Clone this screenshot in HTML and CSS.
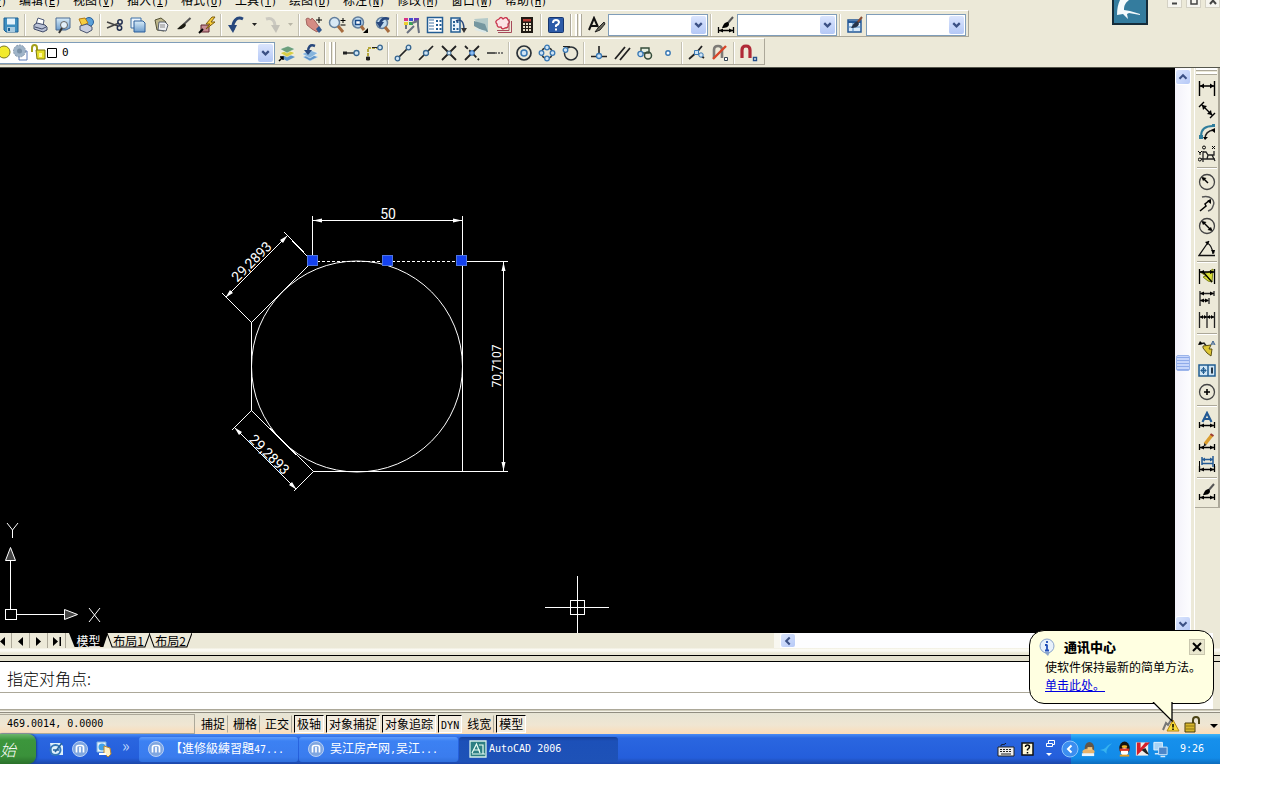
FILE: index.html
```html
<!DOCTYPE html>
<html lang="zh-CN">
<head>
<meta charset="utf-8">
<title>AutoCAD 2006</title>
<link rel="stylesheet" href="styles.css">
</head>
<body>
<svg class="defs" aria-hidden="true">
  <defs>
    <symbol id="chev" viewBox="0 0 16 18"><path d="M4.500 7 8 10.500 11.500 7" fill="none" stroke="#3c5185" stroke-width="2.400"/></symbol>
    <symbol id="brush" viewBox="0 0 18 18"><path d="M15.500 2 8 9" stroke="#555" stroke-width="2"/><path d="M10 7.500C6 8 5 11 2 13c4 1 8-1 9-4z" fill="#1c1c14"/></symbol>
    <symbol id="hdim" viewBox="0 0 18 18"><path d="M1.500 11v6M16.500 11v6M2 14.500h14" stroke="#000" stroke-width="1.300" fill="none"/><path d="M2 14.500l4-2v4zM16 14.500l-4-2v4z"/></symbol>
    <symbol id="mball" viewBox="0 0 18 18"><circle cx="9" cy="9" r="7.500" fill="#7fa6e0" stroke="#b8cff5"/><path d="M5.500 12.500V7.500q0-2 2-2h3q2 0 2 2v5M9 7v5.500" fill="none" stroke="#fff" stroke-width="1.700"/></symbol>
    <linearGradient id="bl" x2="0" y2="1"><stop stop-color="#d9edf9"/><stop offset="1" stop-color="#6c9ccc"/></linearGradient>
  </defs>
</svg>
<div class="screen">
  <header class="header">
    <div class="bars">
      <nav class="menu">
        <a href="#">文件<i>(<u>F</u>)</i></a><a href="#">编辑<i>(<u>E</u>)</i></a><a href="#">视图<i>(<u>V</u>)</i></a><a href="#">插入<i>(<u>I</u>)</i></a><a href="#">格式<i>(<u>O</u>)</i></a><a href="#">工具<i>(<u>T</u>)</i></a><a href="#">绘图<i>(<u>D</u>)</i></a><a href="#">标注<i>(<u>N</u>)</i></a><a href="#">修改<i>(<u>M</u>)</i></a><a href="#">窗口<i>(<u>W</u>)</i></a><a href="#">帮助<i>(<u>H</u>)</i></a>
      </nav>
      <div class="toolbar toolbar-styles">
        <button class="tool" aria-label="保存"><svg viewBox="0 0 18 18"><path d="M2 2h14v14H4l-2-2z" fill="#3f8fc0" stroke="#1d5f93"/><path d="M5 2.500h8v6H5z" fill="#e6f3fb"/><path d="M5 11h8v5H5z" fill="#a9cbe0"/><path d="M6 12h2v3H6z" fill="#1d5f93"/></svg></button>
        <span class="sep"></span>
        <button class="tool" aria-label="打印"><svg viewBox="0 0 18 18"><path d="M5 8 7 2l6 2-1 6z" fill="#fff" stroke="#4e5a78"/><path d="M3 9l3-2 8 2 2 2v3l-4 2-9-3z" fill="#b9c1d6" stroke="#3f4a68"/><path d="M4 11l7 2 4-2" fill="none" stroke="#3f4a68"/></svg></button>
        <button class="tool" aria-label="打印预览"><svg viewBox="0 0 18 18"><path d="M2 2h14v10l-4 2H2z" fill="url(#bl)" stroke="#4a6a92"/><circle cx="10" cy="9" r="3.500" fill="#e2f0fa" stroke="#666"/><path d="M8 12l-3 5" stroke="#333" stroke-width="2"/></svg></button>
        <button class="tool" aria-label="发布"><svg viewBox="0 0 18 18"><circle cx="12" cy="6" r="4.500" fill="#5aa0d8" stroke="#285f9c"/><path d="M2 3l6-1 3 5-6 3z" fill="#f7cd3e" stroke="#b47a12"/><path d="M3 10l7-2 5 3v3l-5 3-7-3z" fill="#c9cede" stroke="#4a5570"/></svg></button>
        <span class="sep"></span>
        <button class="tool" aria-label="剪切"><svg viewBox="0 0 18 18"><path d="M1 6l11 4M1 12l12-5" stroke="#444" stroke-width="1.500"/><circle cx="14" cy="6" r="2.200" fill="none" stroke="#222f50" stroke-width="1.500"/><circle cx="13.500" cy="12" r="2.200" fill="none" stroke="#222f50" stroke-width="1.500"/></svg></button>
        <button class="tool" aria-label="复制"><svg viewBox="0 0 18 18"><path d="M2 2h10v10H2z" fill="#eaf4fc" stroke="#3d6fa5"/><path d="M5 5h9l2 2v9H5z" fill="url(#bl)" stroke="#2c5f9a"/></svg></button>
        <button class="tool" aria-label="粘贴"><svg viewBox="0 0 18 18"><path d="M3 4l6-2 5 4-2 9-7-1z" fill="#bdb68a" stroke="#555236"/><path d="M7 6l6 0 3 3-2 6-8-1z" fill="#eef0f2" stroke="#59606c"/><path d="M8 9h5M8 11h5" stroke="#888"/></svg></button>
        <button class="tool" aria-label="特性匹配"><svg><use href="#brush"/></svg></button>
        <button class="tool" aria-label="块编辑器"><svg viewBox="0 0 18 18"><path d="M3 9h8v7H3z" fill="#c78d94" stroke="#5f2730"/><path d="M14 1 8 8h4l-4 5 9-7h-4l4-5z" fill="#fbd03a" stroke="#7d5c0c"/><path d="M1 17l4-4" stroke="#000" stroke-width="2"/></svg></button>
        <span class="sep"></span>
        <button class="tool" aria-label="放弃"><svg viewBox="0 0 18 18"><path d="M16 3C10 0 5 5 6 14" fill="none" stroke="#27477c" stroke-width="3"/><path d="M1 9h9l-4 8z" fill="#27477c"/></svg></button>
        <button class="drop" aria-label="放弃列表"><svg viewBox="0 0 8 18"><path d="M2 7h5L4.500 10z" fill="#222"/></svg></button>
        <button class="tool" aria-label="重做"><svg viewBox="0 0 18 18"><path d="M3 3c6-2 10 2 9 10" fill="none" stroke="#cbc9c0" stroke-width="3"/><path d="M8 9h9l-4 8z" fill="#c3c1b8"/></svg></button>
        <button class="drop" aria-label="重做列表"><svg viewBox="0 0 8 18"><path d="M2 7h5L4.500 10z" fill="#b8b5a6"/></svg></button>
        <span class="sep"></span>
        <button class="tool" aria-label="平移"><svg viewBox="0 0 18 18"><path d="M1 3l2-1 3 2 1-2 3 3 2 3 3 4-3 4-5-3-5-4z" fill="#d58c84" stroke="#a4655f"/><path d="M11 13l3-3 3 4-3 3z" fill="#33588e"/><path d="M14 1v6M11 4h6" stroke="#000"/></svg></button>
        <button class="tool" aria-label="实时缩放"><svg viewBox="0 0 18 18"><circle cx="6.500" cy="6.500" r="5" fill="#d8e8f4" stroke="#627e9c" stroke-width="1.500"/><path d="M10 10l5 6" stroke="#a76c3f" stroke-width="3"/><path d="M15 2v5M12.500 4.500h5M12.500 9h5" stroke="#000"/></svg></button>
        <button class="tool" aria-label="窗口缩放"><svg viewBox="0 0 18 18"><circle cx="7" cy="6.500" r="5.500" fill="#c2dcf0" stroke="#627e9c" stroke-width="1.500"/><path d="M4.500 4.500h5v4h-5z" fill="#fff" stroke="#194a88" stroke-width="1.500"/><path d="M10 10l3 4" stroke="#a76c3f" stroke-width="3"/><path d="M17 12v5h-5z"/></svg></button>
        <button class="tool" aria-label="缩放上一个"><svg viewBox="0 0 18 18"><circle cx="8" cy="7" r="5.500" fill="#c2dcf0" stroke="#627e9c" stroke-width="1.500"/><path d="M15 3C10 1 6 4 6 9" fill="none" stroke="#27477c" stroke-width="2.500"/><path d="M2 6h8l-4 6z" fill="#27477c"/><path d="M11 11l4 5" stroke="#a76c3f" stroke-width="3"/></svg></button>
        <span class="sep"></span>
        <button class="tool" aria-label="特性"><svg viewBox="0 0 18 18"><path d="M1 2h4v3H1z" fill="#d63384"/><path d="M6 2h4v3H6z" fill="#3d51d0"/><path d="M11 2h5v3h-5z" fill="#6c3bbb"/><path d="M1 6h4v3H1z" fill="#ebcf30"/><path d="M6 6h4v3H6z" fill="#3aa357"/><path d="M9 7l6-2v5l1 7M11 10l-7 7M3 9v4" fill="none" stroke="#6a7282" stroke-width="2"/></svg></button>
        <button class="tool" aria-label="设计中心"><svg viewBox="0 0 18 18"><path d="M1.500 1.500h15v15h-15z" fill="#fff" stroke="#235d93" stroke-width="1.500"/><path d="M3 4h5M3 7h5M3 10h5M3 13h5" stroke="#4577a5"/><path d="M10 4h2v2h-2zM13.500 4h2v2h-2zM10 8h2v2h-2zM13.500 8h2v2h-2zM10 12h2v2h-2zM13.500 12h2v2h-2z" fill="#235d93"/></svg></button>
        <button class="tool" aria-label="工具选项板"><svg viewBox="0 0 18 18"><path d="M2 2h9v14H2z" fill="#eaf3fb" stroke="#235d93" stroke-width="1.500"/><path d="M4 5h2v2H4zM7.500 5h2v2h-2zM4 8.500h2v2H4zM4 12h2v2H4zM7.500 12h2v2h-2z" fill="#235d93"/><path d="M7 5c5-3 8 1 8 9" fill="none" stroke="#27477c" stroke-width="1.500"/><path d="M12 12h6l-3 5z" fill="#333"/></svg></button>
        <button class="tool" aria-label="图纸集"><svg viewBox="0 0 18 18"><path d="M2 3l14-1v14l-5-2z" fill="#b4cac9"/><path d="M2 5l11 3 3 8-5-1-9-5z" fill="#7597a0"/><path d="M3 13l11 3" stroke="#dce9e9" stroke-width="2"/></svg></button>
        <button class="tool" aria-label="标记集"><svg viewBox="0 0 18 18"><path d="M4 3q2-3 4 0 4-3 5 1 3 2 0 4 1 4-3 4-3 2-4-1-4 1-4-3-3-3 2-5z" fill="#fbe3e6" stroke="#c8314a" stroke-width="1.300"/><path d="M2 14.500h12V3M3 16.500h13.500V5" fill="none" stroke="#a64a5b"/></svg></button>
        <button class="tool" aria-label="计算器"><svg viewBox="0 0 18 18"><path d="M3 1h12v16H3z" fill="#1f1a14"/><path d="M5 3h8v2.500H5z" fill="#b53b34"/><path d="M5 7h2v2H5zM8 7h2v2H8zM11 7h2v2h-2zM5 10h2v2H5zM8 10h2v2H8zM11 10h2v2h-2zM5 13h2v2H5zM8 13h2v2H8zM11 13h2v2h-2z" fill="#e8dfc9"/></svg></button>
        <span class="sep"></span>
        <button class="tool" aria-label="帮助"><svg viewBox="0 0 18 18"><rect x="1.500" y="1.500" width="15" height="15" rx="1" fill="#2d5ba8" stroke="#17366e"/><path d="M6 7q0-3 3-3t3 2.500q0 1.500-3 3v1.500M9 12.500v2" fill="none" stroke="#fff" stroke-width="2"/></svg></button>
        <span class="grip"></span>
        <button class="tool" aria-label="文字样式"><svg viewBox="0 0 18 18"><path d="M1 14 6 2l4 9M3 10h6" fill="none" stroke="#111" stroke-width="2"/><path d="M16 6l-6 6-3 4 5-2 5-6z" fill="#66665a" stroke="#222"/></svg></button>
        <div class="combo"><select aria-label="文字样式"><option></option></select><svg class="chev"><use href="#chev"/></svg></div>
        <span class="sep"></span>
        <button class="tool" aria-label="标注样式"><svg viewBox="0 0 18 18"><use href="#hdim"/><path d="M16 1l-6 7" stroke="#555" stroke-width="2"/><path d="M11 6c-4 0-5 4-6 6 4 0 7-1 7-4z"/></svg></button>
        <div class="combo"><select aria-label="标注样式"><option></option></select><svg class="chev"><use href="#chev"/></svg></div>
        <span class="sep"></span>
        <button class="tool" aria-label="表格样式"><svg viewBox="0 0 18 18"><path d="M2 4h13v12H2z" fill="#d8eafa" stroke="#245896" stroke-width="1.500"/><path d="M2 5h13v2H2z" fill="#245896"/><path d="M2 11h13M7 7v9" stroke="#4b83bd"/><path d="M16 1l-5 6" stroke="#8b4d33" stroke-width="2"/><path d="M12 5.500C8 6 7 9 5 12c4 0 7-1 8-4z" fill="#26344b"/></svg></button>
        <div class="combo"><select aria-label="表格样式"><option></option></select><svg class="chev"><use href="#chev"/></svg></div>
      </div>
      <div class="toolbar toolbar-layers">
        <div class="combo combo-layer">
          <svg class="layer-state" viewBox="0 0 62 20"><circle cx="4" cy="9" r="6" fill="#f2ea2e" stroke="#7d7a22"/><path d="M19 8h8v9h-8z" fill="#fff" stroke="#5c7bb5"/><circle cx="19.500" cy="8" r="6" fill="#9fb4c8" stroke="#8196ac" stroke-dasharray="2 1"/><circle cx="19.500" cy="8" r="2.500" fill="#7990a6"/><path d="M32 9V5q0-3 2.500-3T37 5v4" fill="none" stroke="#a39f1a" stroke-width="2"/><path d="M36 7h9v9h-8z" fill="#e4de28" stroke="#7c7812"/><path d="M39 10h3v4h-3z" fill="#fff79a"/><path d="M47.500 5.500h9v9h-9z" fill="#fff" stroke="#000"/></svg>
          <select aria-label="图层"><option>0</option></select><svg class="chev"><use href="#chev"/></svg>
        </div>
        <button class="tool" aria-label="图层置为当前"><svg viewBox="0 0 18 18"><path d="M2 13l8-3 7 3-8 4z" fill="#5c93c9"/><path d="M2 9l8-3 7 3-8 4z" fill="#d7cd45" stroke="#fff" stroke-width=".5"/><path d="M2 5l8-3 7 3-8 4z" fill="#6c9f7b" stroke="#fff" stroke-width=".5"/><path d="M1 17l4-4M2 13h3v3" fill="none" stroke="#000" stroke-width="1.500"/></svg></button>
        <button class="tool" aria-label="上一个图层"><svg viewBox="0 0 18 18"><path d="M2 13l7-3 8 3-8 4z" fill="#5c93c9" stroke="#dcebf8" stroke-width=".5"/><path d="M1 10l8-4 8 3-8 5z" fill="#86b4dc" stroke="#fff" stroke-width=".5"/><path d="M14 2C9 0 7 3 7 8" fill="none" stroke="#27477c" stroke-width="2.500"/><path d="M3 6h8l-4 5z" fill="#27477c"/></svg></button>
        <span class="grip"></span>
        <button class="tool" aria-label="临时追踪点"><svg viewBox="0 0 18 18"><path d="M4 9h8" stroke="#333" stroke-width="1.500"/><path d="M1 7.500h4v3H1z" fill="#222"/><circle cx="14.500" cy="9" r="2.500" fill="#cfe4f4" stroke="#35658f" stroke-width="1.300"/></svg></button>
        <button class="tool" aria-label="捕捉自"><svg viewBox="0 0 18 18"><path d="M3 12V4h9" fill="none" stroke="#b5a83c" stroke-width="2" stroke-dasharray="3 1"/><path d="M1.500 13h3v3h-3zM7 3.500h6" fill="#222" stroke="#222"/><circle cx="15" cy="3.500" r="2.300" fill="#cfe4f4" stroke="#35658f" stroke-width="1.300"/></svg></button>
        <span class="sep"></span>
        <button class="tool" aria-label="捕捉到端点"><svg viewBox="0 0 18 18"><path d="M3 15 15 3" stroke="#222" stroke-width="1.700"/><circle cx="14.500" cy="3.500" r="2.300" fill="#cfe4f4" stroke="#35658f" stroke-width="1.300"/><circle cx="3.500" cy="14.500" r="2.300" fill="#cfe4f4" stroke="#35658f" stroke-width="1.300"/></svg></button>
        <button class="tool" aria-label="捕捉到中点"><svg viewBox="0 0 18 18"><path d="M2 16 16 2" stroke="#222" stroke-width="1.700"/><circle cx="9" cy="9" r="2.500" fill="#cfe4f4" stroke="#35658f" stroke-width="1.300"/></svg></button>
        <button class="tool" aria-label="捕捉到交点"><svg viewBox="0 0 18 18"><path d="M2 2l14 14M16 2 2 16" stroke="#222" stroke-width="1.800"/><circle cx="9" cy="9" r="2" fill="#cfe4f4" stroke="#35658f"/></svg></button>
        <button class="tool" aria-label="捕捉到外观交点"><svg viewBox="0 0 18 18"><path d="M2 16 16 2" stroke="#222" stroke-width="1.800"/><path d="M2 2l14 14" stroke="#222" stroke-width="1.800" stroke-dasharray="4 2"/><circle cx="9" cy="9" r="2.300" fill="#8dbcf0" stroke="#2667b5"/></svg></button>
        <button class="tool" aria-label="捕捉到延长线"><svg viewBox="0 0 18 18"><path d="M1 9h8" stroke="#333" stroke-width="1.600"/><path d="M9 9h8" stroke="#555" stroke-width="1.600" stroke-dasharray="2 1"/></svg></button>
        <span class="sep"></span>
        <button class="tool" aria-label="捕捉到圆心"><svg viewBox="0 0 18 18"><circle cx="9" cy="9" r="7" fill="none" stroke="#2b3238" stroke-width="1.700"/><circle cx="9" cy="9" r="3" fill="#cfe4f4" stroke="#3878b4" stroke-width="1.500"/></svg></button>
        <button class="tool" aria-label="捕捉到象限点"><svg viewBox="0 0 18 18"><circle cx="9" cy="9" r="5.500" fill="none" stroke="#2b3238" stroke-width="1.500"/><g fill="#cfe4f4" stroke="#3878b4" stroke-width="1.300"><circle cx="9" cy="3.500" r="2.300"/><circle cx="3.500" cy="9" r="2.300"/><circle cx="14.500" cy="9" r="2.300"/><circle cx="9" cy="14.500" r="2.300"/></g></svg></button>
        <button class="tool" aria-label="捕捉到切点"><svg viewBox="0 0 18 18"><path d="M2 2.500h7" stroke="#222"/><circle cx="10" cy="9.500" r="6.500" fill="none" stroke="#2b3238" stroke-width="1.500"/><circle cx="4.500" cy="6" r="2.300" fill="#cfe4f4" stroke="#3878b4" stroke-width="1.300"/></svg></button>
        <span class="sep"></span>
        <button class="tool" aria-label="捕捉到垂足"><svg viewBox="0 0 18 18"><path d="M9 2v9M1 12.500h16" stroke="#222" stroke-width="1.600"/><circle cx="9" cy="12" r="2.500" fill="#cfe4f4" stroke="#3878b4" stroke-width="1.300"/></svg></button>
        <button class="tool" aria-label="捕捉到平行线"><svg viewBox="0 0 18 18"><path d="M2 15 12 3M7 16 17 4" stroke="#222" stroke-width="1.800"/></svg></button>
        <button class="tool" aria-label="捕捉到插入点"><svg viewBox="0 0 18 18"><path d="M5 4h8v5H5z" fill="#e4eedf" stroke="#344c3a" stroke-width="1.400"/><circle cx="12" cy="11.500" r="3.500" fill="none" stroke="#344c3a" stroke-width="1.500"/><circle cx="4.500" cy="10" r="2.600" fill="#cfe4f4" stroke="#3878b4" stroke-width="1.300"/></svg></button>
        <button class="tool" aria-label="捕捉到节点"><svg viewBox="0 0 18 18"><circle cx="9" cy="9" r="2.200" fill="#fff" stroke="#3878b4" stroke-width="1.400"/></svg></button>
        <span class="sep"></span>
        <button class="tool" aria-label="捕捉到最近点"><svg viewBox="0 0 18 18"><path d="M1 15 9 8l5-6M8 8l8 6" fill="none" stroke="#222" stroke-width="1.800"/><path d="M6.500 6.500h4v4h-4z" fill="#cfe4f4" stroke="#3878b4"/><circle cx="13" cy="11" r="2.200" fill="#cfe4f4" stroke="#3878b4"/></svg></button>
        <button class="tool" aria-label="无捕捉"><svg viewBox="0 0 18 18"><path d="M3 14V6q0-4 4-4t4 4v8" fill="none" stroke="#7d7b76" stroke-width="2.600"/><path d="M2 15 15 2" stroke="#d84528" stroke-width="2.400"/><path d="M13.500 13.500h3v3h-3z" fill="#fff" stroke="#345"/></svg></button>
        <span class="sep"></span>
        <button class="tool" aria-label="对象捕捉设置"><svg viewBox="0 0 18 18"><path d="M2 14V6q0-4 4-4t4 4v8" fill="none" stroke="#b02a38" stroke-width="3.200"/><path d="M13.500 13.500h3v3h-3z" fill="#fff" stroke="#24508c" stroke-width="1.400"/></svg></button>
      </div>
    </div>
    <svg class="brand" viewBox="0 0 36 25" aria-label="通讯中心标志"><path d="M0 0h36v25H0z" fill="#152c3a"/><path d="M2 0h32v23H2z" fill="#347c9e"/><path d="M8 0h9c-4 3-5 6-5 10l6 1 10 3v1l-11-2-2 1 1 5-5-5-6 1C5 9 6 4 8 0z" fill="#f4fafc"/></svg>
    <div class="winbtns">
      <button aria-label="最小化"><svg viewBox="0 0 10 10"><path d="M2 6.500h5" stroke="#444" stroke-width="2"/></svg></button>
      <button aria-label="还原"><svg viewBox="0 0 10 10"><path d="M2 1h6v6H2z" fill="none" stroke="#444" stroke-width="1.500"/></svg></button>
      <button aria-label="关闭"><svg viewBox="0 0 10 10"><path d="M2 0l6 7M8 0 2 7" stroke="#444" stroke-width="2"/></svg></button>
    </div>
  </header>

  <main class="workspace">
    <svg class="drawing" role="img" aria-label="图形区">
      <g transform="translate(0 -68)" fill="none" stroke="#fff">
        <circle cx="357" cy="366.500" r="105.500"/>
        <g shape-rendering="crispEdges">
          <path d="M251.500 322v89M313 471.500h195M462.500 216v255M466 261.500h42M503.500 262v209M313 220.500h149M312.500 216v45"/>
          <path d="M312 261.500h150" stroke-dasharray="3 2"/>
          <path d="M251.500 322.500l61-61M251.500 410.500l62 61M287.500 235.500l-62 62M284.500 232.500l28 29M222.500 293.500l29 29M234.500 427.500l62 62M251.500 410.500l-20 20M313.500 471.500l-20 20"/>
        </g>
        <g fill="#fff" stroke="none">
          <path d="M313 220.500l9-2v4zM462 220.500l-9-2v4zM503.500 262l-2 9h4zM503.500 471l-2-9h4zM287.500 235.500l-7.500 4.500 3 3zM225.500 297.500l4.500-7.500 3 3zM234.500 427.500l4.500 7.500 3-3zM296.500 489.500l-7.500-4.500 3-3z"/>
        </g>
        <g class="dims" fill="#fff" stroke="none" text-anchor="middle">
          <text x="388" y="219">50</text>
          <text transform="translate(255 265) rotate(-45)">29,2893</text>
          <text transform="translate(266 458) rotate(45)">29,2893</text>
          <text class="dim-small" transform="translate(501 366) rotate(-90)">70,7107</text>
        </g>
        <g fill="#1441ee" stroke="#4d74e0" shape-rendering="crispEdges">
          <path d="M307.500 255.500h10v10h-10zM382.500 255.500h10v10h-10zM456.500 255.500h10v10h-10z"/>
        </g>
        <g shape-rendering="crispEdges"><path d="M5.500 609.500h11v10h-11zM10.500 609V560M17 614.500h47M545 607.500h64M577.500 576v57M570.500 600.500h14v14h-14z"/></g>
        <g fill="#444"><path d="M10.500 547.500l-5 13h10zM77.500 614.500l-13-5v10z"/></g>
        <path d="M7 523l5.500 7 5.500-7M12.500 530v8M89 608l11 14M100 608l-11 14"/>
      </g>
    </svg>
    <div class="vscroll">
      <button class="sbtn" aria-label="向上滚动"><svg viewBox="0 0 16 16"><path d="M4 10l4-4 4 4" fill="none" stroke="#3c5185" stroke-width="2.400"/></svg></button>
      <span class="thumb"></span>
      <button class="sbtn" aria-label="向下滚动"><svg viewBox="0 0 16 16"><path d="M4 6l4 4 4-4" fill="none" stroke="#3c5185" stroke-width="2.400"/></svg></button>
    </div>
    <aside class="dimbar">
      <div class="dimtools">
        <span class="hgrip"></span>
        <button class="vtool" aria-label="线性"><svg viewBox="0 0 18 18"><path d="M1.500 2v15M16.500 2v15M2 7h14" stroke="#000" stroke-width="1.400"/><path d="M2 7l4-2.500v5zM16 7l-4-2.500v5z"/></svg></button>
        <button class="vtool" aria-label="对齐"><svg viewBox="0 0 18 18"><path d="M1 6l5-5M12 17l5-5M4 4l10 10" stroke="#000" stroke-width="1.400"/><path d="M4 4l5 1-4 4zM14 14l-5-1 4-4z"/></svg></button>
        <button class="vtool" aria-label="弧长"><svg viewBox="0 0 18 18"><path d="M3 13Q3 3 15 3" fill="none" stroke="#2e7d9c" stroke-width="2"/><path d="M7 16q0-8 9-9" fill="none" stroke="#222" stroke-width="1.600"/><path d="M1 12h4v4H1zM14 1h3v3h-3z" fill="#2e7d9c"/><path d="M5 14h5l-3 3zM17 5v5l-4-3z"/></svg></button>
        <button class="vtool" aria-label="坐标"><svg viewBox="0 0 18 18"><path d="M5 17V6M3 14h14M5 7h3l2 3h6V6M10 10l-1 4M14 10l3 6" fill="none" stroke="#222" stroke-width="1.300"/><circle cx="6" cy="2.500" r="1.500" fill="none" stroke="#000"/><path d="M14 1l3 3M17 1l-3 3M0 6l2 2 2-2M2 8v2" stroke="#000" fill="none"/><circle cx="1.800" cy="14.500" r="1.500" fill="none" stroke="#000"/></svg></button>
        <span class="hsep"></span>
        <button class="vtool" aria-label="半径"><svg viewBox="0 0 18 18"><circle cx="9" cy="9" r="7.500" fill="none" stroke="#444" stroke-width="1.300"/><path d="M10 10 5 5" stroke="#000" stroke-width="1.500"/><path d="M3.500 4l5 1-3.500 3z"/></svg></button>
        <button class="vtool" aria-label="折弯"><svg viewBox="0 0 18 18"><path d="M4 2c8-2 14 3 11 9q-1 4-5 5" fill="none" stroke="#555" stroke-width="1.400"/><path d="M2 16l6-5-1-2 5-4" fill="none" stroke="#000" stroke-width="1.500"/><path d="M13 4v5L9 6z"/></svg></button>
        <button class="vtool" aria-label="直径"><svg viewBox="0 0 18 18"><circle cx="9" cy="9" r="7.500" fill="none" stroke="#444" stroke-width="1.300"/><path d="M5 5l8 8" stroke="#000" stroke-width="1.500"/><path d="M3.500 4l5 1-3.500 3zM14.500 14l-5-1 3.500-3z"/></svg></button>
        <button class="vtool" aria-label="角度"><svg viewBox="0 0 18 18"><path d="M17 16.500H1L11 2M9 4q5 2 6 11" fill="none" stroke="#111" stroke-width="1.300"/><path d="M7 3l4-1-1 4zM13 11h4l-1 4z"/></svg></button>
        <span class="hsep"></span>
        <button class="vtool" aria-label="快速标注"><svg viewBox="0 0 18 18"><path d="M2 5l7 1 6-4-1 13-4-1-5-4 3-1z" fill="#d8dc35" stroke="#7f8418"/><path d="M1.500 2v15M16.500 2v15M2 5h14M6 6l8 9" stroke="#000" stroke-width="1.300"/><path d="M2 5l4-2v4zM16 5l-4-2v4z"/></svg></button>
        <button class="vtool" aria-label="基线"><svg viewBox="0 0 18 18"><path d="M2 2v15M2 4.500h14M16 2v5M2 11.500h8M11 9v6" stroke="#222" stroke-width="1.300"/><path d="M2 4.500l4-2v4zM16 4.500l-4-2v4zM2 11.500l4-2v4zM11 11.500l-4-2v4z"/></svg></button>
        <button class="vtool" aria-label="连续"><svg viewBox="0 0 18 18"><path d="M1.500 1v16M9 1v16M16.500 1v16M1 6h15" stroke="#222" stroke-width="1.300"/><path d="M2 6l3-2v4zM9 6L6 4v4zM9 6l3-2v4zM16 6l-3-2v4z"/></svg></button>
        <span class="hsep"></span>
        <button class="vtool" aria-label="快速引线"><svg viewBox="0 0 18 18"><path d="M1 5l5-1 3 4" fill="none" stroke="#222" stroke-width="1.500"/><path d="M0 6l2-4 3 3z"/><path d="M13 6l2-4 2 4M14 5h2" fill="none" stroke="#335a8c"/><path d="M5 7l8-1-2 4h3l-1 7-4-3-4-5z" fill="#ddc634" stroke="#5d5012"/></svg></button>
        <button class="vtool" aria-label="公差"><svg viewBox="0 0 18 18"><path d="M1 4h16v11H1zM10 4v11" fill="#cfe5f5" stroke="#225d91" stroke-width="1.500"/><circle cx="5.500" cy="9.500" r="2" fill="none" stroke="#225d91"/><path d="M5.500 6v7M2.500 9.500h6" stroke="#225d91"/><path d="M14 6.500v6" stroke="#123" stroke-width="1.800"/></svg></button>
        <button class="vtool" aria-label="圆心标记"><svg viewBox="0 0 18 18"><circle cx="9" cy="9" r="7.500" fill="none" stroke="#444" stroke-width="1.300"/><path d="M9 6v6M6 9h6" stroke="#000" stroke-width="1.600"/></svg></button>
        <span class="hsep"></span>
        <button class="vtool" aria-label="编辑标注"><svg viewBox="0 0 18 18"><use href="#hdim"/><path d="M4.500 11 9 2l4.500 9M6 8h6" fill="none" stroke="#235a94" stroke-width="2.200"/></svg></button>
        <button class="vtool" aria-label="编辑标注文字"><svg viewBox="0 0 18 18"><use href="#hdim"/><path d="M14 2 7 11" stroke="#db9d2d" stroke-width="3.500"/><path d="M15.500 3l-3-2" stroke="#9b3b33" stroke-width="2"/><path d="M8.500 12 6 13.500 6 10z" fill="#222"/></svg></button>
        <button class="vtool" aria-label="标注更新"><svg viewBox="0 0 18 18"><use href="#hdim"/><path d="M4 10V2M15 12V1M4 4.500h11M4 8.500h11" stroke="#235a94" stroke-width="1.500"/><path d="M4 4.500l3-2v4zM15 4.500l-3-2v4z" fill="#235a94"/><path d="M1.500 6v6M16.500 9v4" stroke="#000"/></svg></button>
        <span class="hsep"></span>
        <button class="vtool" aria-label="标注样式"><svg viewBox="0 0 18 18"><use href="#hdim"/><path d="M16 1l-6 7" stroke="#555" stroke-width="2"/><path d="M11 6c-4 0-5 4-6 6 4 0 7-1 7-4z"/></svg></button>
      </div>
    </aside>
  </main>

  <div class="tabrow">
    <button class="nav nav-first" aria-label="第一个"><svg viewBox="0 0 12 14"><path d="M5 3v9L0 7.500z"/></svg></button>
    <button class="nav" aria-label="上一个"><svg viewBox="0 0 12 14"><path d="M8 3v9L3 7.500z"/></svg></button>
    <button class="nav" aria-label="下一个"><svg viewBox="0 0 12 14"><path d="M3 3v9l5-4.500z"/></svg></button>
    <button class="nav" aria-label="最后一个"><svg viewBox="0 0 12 14"><path d="M2 3v9l5-4.500zM8.500 3h1.500v9H8.500z"/></svg></button>
    <div class="tabs">
      <button class="tab tab-active"><svg viewBox="0 0 42 15" preserveAspectRatio="none"><path d="M0 0h42l-5 14H6z" fill="#000"/></svg><span>模型</span></button>
      <button class="tab"><svg viewBox="0 0 42 15" preserveAspectRatio="none"><path d="M0 0l5 14h32l5-14" fill="#ece9d8" stroke="#000"/></svg><span>布局1</span></button>
      <button class="tab"><svg viewBox="0 0 42 15" preserveAspectRatio="none"><path d="M0 0l5 14h32l5-14" fill="#ece9d8" stroke="#000"/></svg><span>布局2</span></button>
    </div>
    <div class="hscroll"><button class="sbtn" aria-label="向左滚动"><svg viewBox="0 0 16 16"><path d="M10 4 6 8l4 4" fill="none" stroke="#3c5185" stroke-width="2.400"/></svg></button></div>
  </div>
  <div class="splitter"></div>
  <section class="command">
    <p class="history">指定对角点:</p>
    <input class="prompt" type="text" aria-label="命令行">
  </section>

  <footer class="status">
    <output class="coords">469.0014, 0.0000</output>
    <button class="mode">捕捉</button><button class="mode">栅格</button><button class="mode">正交</button><button class="mode on">极轴</button><button class="mode on">对象捕捉</button><button class="mode on">对象追踪</button><button class="mode on"><i>DYN</i></button><button class="mode">线宽</button><button class="mode on">模型</button>
    <div class="status-tray">
      <svg class="tray-comm" viewBox="0 0 20 18"><path d="M2 15l3-7 2 2 3-5" stroke="#777" stroke-width="2" fill="none"/><path d="M12 5l6 11H6z" fill="#f7dc3c" stroke="#b6860c"/><path d="M12 9v3.500M12 13.500V15" stroke="#000" stroke-width="1.500"/></svg>
      <svg class="tray-lock" viewBox="0 0 18 18"><path d="M9 8V5q0-3 3-3t3 3v4" fill="none" stroke="#4c4415" stroke-width="2"/><path d="M1 8h10v9H1z" fill="#d8b62c" stroke="#4c3e0a"/><path d="M2 11h8M2 14h8" stroke="#8c7414"/></svg>
      <svg class="tray-more" viewBox="0 0 10 18"><path d="M1 9h8l-4 4z"/></svg>
    </div>
  </footer>

  <div class="taskbar">
    <button class="start">始</button>
    <div class="quick">
      <svg viewBox="0 0 18 18"><path d="M3 3h10l3 3v9H5z" fill="#dff1fb"/><circle cx="8.500" cy="10" r="5" fill="none" stroke="#3478b8" stroke-width="2"/><path d="M6 10h6M8 12l7-9" stroke="#24639f" stroke-width="1.500"/></svg>
      <svg><use href="#mball"/></svg>
      <svg viewBox="0 0 18 18"><path d="M2 2h9v10H2z" fill="#e7f3fb" stroke="#7fb4e0"/><circle cx="7" cy="7" r="3.500" fill="#3fa0e8"/><path d="M9 6l6 2 1 6-3 3-4-4z" fill="#fff0c4" stroke="#b9862f"/><path d="M4 14h7" stroke="#fff" stroke-width="2"/></svg>
    </div>
    <span class="more">»</span>
    <div class="tasks">
      <button class="task"><svg><use href="#mball"/></svg><span>【進修級練習題<i>47...</i></span></button>
      <button class="task"><svg><use href="#mball"/></svg><span>吴江房产网<i>,</i>吴江<i>...</i></span></button>
      <button class="task task-on"><svg viewBox="0 0 18 18"><path d="M1 1h16v16H1z" fill="#2d7f83" stroke="#d5f0e8" stroke-width="1.300"/><path d="M3 13 7.500 4 11 13M4 10h7M10 5h4v9M3 14h13" fill="none" stroke="#e9fff4" stroke-width="1.200"/></svg><i>AutoCAD 2006</i></button>
    </div>
    <div class="lang">
      <svg viewBox="0 0 18 18"><path d="M4 6c0-3 3 0 5-3" stroke="#111" fill="none"/><path d="M1 7h16v9H1z" fill="#eee" stroke="#222"/><path d="M3 9.500h12M3 11.500h12" stroke="#222" stroke-dasharray="2 1"/><path d="M4 14h10" stroke="#222"/></svg>
      <svg viewBox="0 0 18 18"><path d="M3 3h11v12H3z" fill="#fff9d8" stroke="#111" stroke-width="1.500"/><path d="M6.500 7q0-2 2-2t2 2q0 1-2 2.500v1M8.500 12v1.500" fill="none" stroke="#000" stroke-width="1.500"/></svg>
      <svg viewBox="0 0 18 18"><path d="M5.500 3.500h6v3h-6z" fill="none" stroke="#fff"/><path d="M7.500 3V0.500h6v4h-2" fill="none" stroke="#fff"/><path d="M5 13h6l-3 3z" fill="#fff"/></svg>
    </div>
    <div class="tray">
      <button class="expand" aria-label="展开"><svg viewBox="0 0 18 18"><circle cx="9" cy="9" r="8" fill="#3c8ef0" stroke="#8cc5fb"/><path d="M10.500 5.500 7 9l3.500 3.500" fill="none" stroke="#fff" stroke-width="2"/></svg></button>
      <svg viewBox="0 0 18 18"><ellipse cx="10" cy="8" rx="5" ry="6.500" fill="#61564a"/><ellipse cx="9" cy="12" rx="6.500" ry="3.500" fill="#e9b36a"/><path d="M2 15h13" stroke="#e8f5ff" stroke-width="3"/><path d="M8 7h5v3H8z" fill="#f5c77e"/></svg>
      <svg viewBox="0 0 18 18"><path d="M15 3C9 5 9 8 6 9l-4 1 4 1 3 3q-1-5 6-11" fill="#37b3ef"/></svg>
      <svg viewBox="0 0 18 18"><ellipse cx="9" cy="8" rx="5.500" ry="7" fill="#15130f"/><ellipse cx="9" cy="12" rx="4" ry="4" fill="#fff"/><path d="M4 8.500h10v2.500H4z" fill="#dc3222"/><ellipse cx="9" cy="6.500" rx="3" ry="1.500" fill="#f2b42a"/><path d="M4 16h10" stroke="#e59b20" stroke-width="2"/></svg>
      <svg viewBox="0 0 18 18"><path d="M2 2h13v14H2z" fill="#efece8"/><path d="M3 2h4v6l5-6h5l-7 7-7 7z" fill="#d5202a"/><path d="M8 10l4-2 4 7-3-1z" fill="#222"/></svg>
      <svg viewBox="0 0 18 18"><path d="M2 2h9v8H2z" fill="#a7d2f5" stroke="#e4f4ff"/><path d="M7 7h9v8H7z" fill="#4c86c9" stroke="#cfe8fc"/><path d="M3 14h4M9 17h5" stroke="#cfe8fc" stroke-width="1.500"/></svg>
      <time>9:26</time>
    </div>
  </div>

  <div class="balloon" role="alertdialog" aria-labelledby="balloon-title">
    <div class="balloon-head">
      <svg viewBox="0 0 18 18"><circle cx="9" cy="8" r="7" fill="#e8f1fb" stroke="#8ba5cc"/><path d="M6 14l4 4 2-4z" fill="#8ba5cc"/><path d="M9 3v2M9 6.500v6M7 12.500h4M7 7h2" stroke="#2350b8" stroke-width="1.800"/></svg>
      <strong id="balloon-title">通讯中心</strong>
      <button class="balloon-close" aria-label="关闭"><svg viewBox="0 0 14 14"><path d="M3 3l8 8M11 3l-8 8" stroke="#000" stroke-width="2"/></svg></button>
    </div>
    <p>使软件保持最新的简单方法。</p>
    <a href="#">单击此处。</a>
    <svg class="tail" viewBox="0 0 22 22"><path d="M1 0l19 19V0" fill="#ffffe1" stroke="#000" stroke-width="1.300"/></svg>
  </div>
</div>
</body>
</html>
```
FILE: styles.css
```css
* { box-sizing: border-box; }
body {
  margin: 0;
  background: #fff;
  color: #000;
  font: 12px/16px "Noto Sans CJK SC", sans-serif;
}
button, select, input { font: inherit; color: inherit; margin: 0; padding: 0; border: 0; background: none; border-radius: 0; }
svg { display: block; flex: none; }
i { font: 10px/16px "DejaVu Sans Mono", monospace; }
.defs { position: absolute; width: 0; height: 0; }
.screen { position: relative; margin-right: 60px; background: #ece9d8; overflow: hidden; }

/* menu and toolbars */
.header { display: flex; border-bottom: 1px solid #55564c; }
.bars { flex: 1; padding-bottom: 2px; min-width: 0; }
.menu { display: flex; height: 18px; margin: -8px 0 0 -35px; }
.menu a { width: 54px; flex: none; white-space: nowrap; color: #000; text-decoration: none; }
.toolbar {
  display: flex;
  align-items: center;
  width: max-content;
  padding-top: 3px;
  border-top: 1px solid #fff;
  border-bottom: 1px solid #aca899;
  border-right: 1px solid #aca899;
}
.toolbar-styles { padding-right: 2px; }
.toolbar-layers { margin-top: 1px; padding-right: 4px; }
.tool { display: grid; place-items: center; width: 23px; height: 22px; }
.tool:first-child { width: 22px; }
.tool svg { width: 18px; height: 18px; }
.drop { width: 13px; height: 22px; display: grid; place-items: center; }
.drop svg { width: 8px; height: 18px; }
.sep { width: 6px; height: 22px; background: linear-gradient(#c4c1b2, #c4c1b2) 2px 0 / 1px 100% no-repeat, linear-gradient(#fff, #fff) 3px 0 / 1px 100% no-repeat; }
.grip { width: 18px; height: 22px; background: linear-gradient(90deg, transparent 3px, #aca899 3px 4px, #fff 4px 5px, transparent 5px 8px, #fff 8px 10px, #aca899 10px 11px, transparent 11px 12px, #fff 12px 14px, #aca899 14px 15px, transparent 15px); }
.combo { display: flex; width: 100px; height: 22px; border: 1px solid #7f9db9; background: #fff; }
.combo select { flex: 1; min-width: 0; appearance: none; font: 11px/18px "DejaVu Sans Mono", monospace; }
.combo .chev { width: 15px; height: 18px; margin: 1px; background: linear-gradient(#dbe5fd, #b4c8f6); border-radius: 2px; }
.combo-layer { width: 275px; border-left: 0; }
.layer-state { width: 62px; height: 20px; }
.brand { width: 36px; height: 25px; margin-right: 19px; }
.winbtns { display: flex; gap: 4px; }
.winbtns button { width: 15px; height: 8px; padding: 0 2px; background: #f6f5ef; border: 1px solid #d4d1c4; border-top: 0; }
.winbtns svg { width: 10px; height: 10px; margin-top: -3px; }

/* drawing area */
.workspace { display: flex; }
.drawing { flex: 1; min-width: 0; height: 565px; background: #000; }
.dims { font: 400 14px "Roboto", sans-serif; }
.dim-small { font-size: 12px; }
.vscroll { display: flex; flex-direction: column; justify-content: space-between; width: 19px; padding: 1px 3px 1px 0; background: linear-gradient(90deg, #f3f2fa, #fdfdff 16px, #ece9d8 16px); }
.sbtn { width: 16px; height: 16px; border: 1px solid #fff; border-radius: 3px; background: linear-gradient(135deg, #dbe5fd, #b6c9f7); }
.sbtn svg { width: 14px; height: 14px; }
.thumb { height: 16px; margin: 24px 1px 0; border: 1px solid #9cb5ea; border-radius: 2px; background: repeating-linear-gradient(#c7d6fb 0 1px, #8fabea 1px 2px, #c7d6fb 2px 3px); }
.dimbar { width: 26px; border-left: 1px solid #fff; }
.dimtools { display: flex; flex-direction: column; align-items: center; padding-bottom: 4px; border-right: 2px solid #aca899; border-bottom: 1px solid #aca899; }
.hgrip { width: 21px; height: 9px; background: linear-gradient(#fff 2px, #aca899 2px 3px, transparent 3px 4px, #fff 4px 6px, #aca899 6px 7px, transparent 7px); }
.vtool { display: grid; place-items: center; width: 23px; height: 22px; }
.vtool svg { width: 18px; height: 18px; }
.hsep { width: 20px; height: 6px; background: linear-gradient(transparent 2px, #aca899 2px 3px, #fff 3px 4px, transparent 4px); }

/* layout tabs and command window */
.tabrow { display: flex; height: 22px; padding-bottom: 7px; background: linear-gradient(#ece9d8 15px, #fbfaf3 16px 18px, #ece9d8 20px); }
.nav { display: grid; place-items: center; width: 18px; border-right: 1px solid #aca899; }
.nav-first { width: 12px; }
.nav svg { width: 12px; height: 14px; }
.tabs { display: flex; flex: 1; padding-left: 3px; }
.tab { position: relative; width: 43px; height: 15px; line-height: 15px; white-space: nowrap; }
.tab + .tab { margin-left: -1px; }
.tab svg { position: absolute; inset: 0; width: 100%; height: 100%; }
.tab span { position: relative; }
.tab-active { width: 39px; color: #fff; }
.hscroll { width: 36%; border-left: 6px solid #f8f7f0; background: #fdfdff; margin-right: 7px; }
.hscroll .sbtn { display: block; height: 15px; }
.splitter { height: 7px; border-top: 1px solid #000; border-bottom: 1px solid #000; background: #e4e1cf; }
.command { margin-right: 7px; background: #fff; }
.history { margin: 0; padding: 4px 7px 2px; font-size: 16px; line-height: 24px; height: 31px; font-weight: 300; border-bottom: 1px solid #aca899; }
.prompt { display: block; width: 100%; height: 16px; outline: 0; }

/* status bar */
.status { display: flex; align-items: center; height: 25px; padding-top: 3px; border-top: 1px solid #aca899; background: linear-gradient(#d0cdbc 1px, #f5f3e8 1px 2px, #908d80 2px 3px, #e6e4d4 3px, #f0e6d2 15px, #fbdcb8); }
.coords { width: 195px; margin-right: 2px; padding-left: 7px; font: 10px/18px "DejaVu Sans Mono", monospace; border: 1px solid #aca899; border-left: 0; }
.mode { margin: 0 1px; padding: 0 2px; height: 18px; line-height: 16px; white-space: nowrap; border: 1px solid transparent; border-right-color: #aca899; }
.mode.on { border-color: #000 #fff #fff #000; background: #f3ecdf; }
.status-tray { display: flex; align-items: center; margin-left: auto; gap: 3px; padding-right: 1px; }
.tray-comm { width: 20px; height: 18px; }
.tray-lock { width: 18px; height: 18px; }
.tray-more { width: 10px; height: 18px; margin-left: 4px; }

/* taskbar */
.taskbar { display: flex; align-items: center; height: 30px; color: #fff; background: linear-gradient(#4a8cf5, #2a66e0 4px, #245edb 24px, #1c47a8); }
.start { width: 36px; height: 30px; padding-right: 20px; font-size: 16px; font-style: italic; font-weight: 300; line-height: 26px; border-radius: 0 8px 8px 0; background: linear-gradient(#6cb56c, #3c963c 6px, #3a913a 22px, #2a702a); box-shadow: 1px 0 2px #17408f; }
.quick { display: flex; gap: 6px; padding-left: 11px; }
.quick svg, .task svg { width: 18px; height: 18px; }
.more { width: 26px; padding-left: 9px; font-size: 16px; line-height: 16px; margin-bottom: 8px; color: #b9d2fb; }
.tasks { display: flex; flex: 1; gap: 1px; min-width: 0; }
.task { display: flex; align-items: center; gap: 5px; width: 159px; height: 25px; padding-left: 8px; border-radius: 3px; white-space: nowrap; text-align: left; overflow: hidden; background: linear-gradient(#5d9bfb, #3c81f3 4px, #3a7cee 20px, #3070dc); }
.task svg + * { flex: 1; }
.task-on { background: linear-gradient(#16409a, #1c50b8 4px, #1e52b7); padding-left: 10px; gap: 2px; }
.lang { display: flex; gap: 4px; margin-right: 12px; }
.lang svg { width: 18px; height: 18px; }
.tray { display: flex; align-items: center; height: 30px; padding-right: 16px; background: linear-gradient(#3fb4f8, #1690ec 5px, #128be8 24px, #0d6cbc); }
.tray > svg { width: 17px; height: 18px; margin-left: 1px; }
.expand { margin-left: -10px; width: 18px; height: 18px; }
.tray time { margin-left: 11px; font: 10px/16px "DejaVu Sans Mono", monospace; }

/* notification */
.balloon { position: absolute; right: 6px; bottom: 60px; width: 185px; height: 74px; padding: 6px 8px 0 15px; border: 1px solid #000; border-radius: 15px; background: #ffffe1; }
.balloon-head { display: flex; align-items: center; gap: 8px; height: 20px; margin-left: -7px; }
.balloon-head svg { width: 18px; height: 18px; }
.balloon-head strong { flex: 1; font-size: 13px; font-weight: 900; }
.balloon-close { border: 1px solid #c9c7ae; background: #e9e7ce; width: 16px; height: 16px; }
.balloon .balloon-close svg { width: 14px; height: 14px; }
.balloon p { margin: 2px 0; white-space: nowrap; }
.balloon a { color: #0000e0; }
.tail { position: absolute; right: 39px; top: 71px; width: 22px; height: 22px; }
```
